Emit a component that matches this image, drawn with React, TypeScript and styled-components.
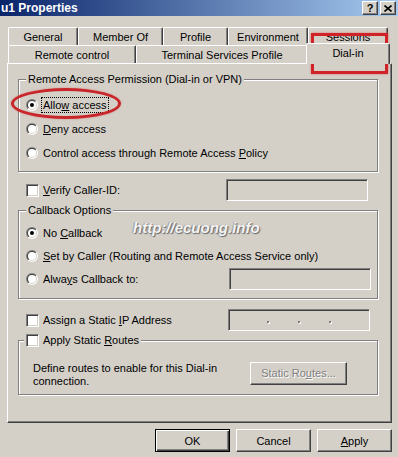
import React from "react";
import styled, { createGlobalStyle, css } from "styled-components";

const GlobalStyle = createGlobalStyle`
  html, body {
    margin: 0;
    padding: 0;
    background: #d4d0c8;
  }
  body {
    font-family: "Liberation Sans", Arial, sans-serif;
    font-size: 11px;
    color: #000;
  }
`;

const Window = styled.div`
  position: relative;
  width: 398px;
  height: 457px;
  background: #d4d0c8;
  overflow: hidden;
  display: flex;
  flex-direction: column;
`;

const TitleBar = styled.div`
  height: 16px;
  display: flex;
  align-items: center;
  padding: 0 2px 0 1px;
  background: linear-gradient(to right, #0a246a, #a6caf0);
`;

const Title = styled.div`
  flex: 1;
  color: #fff;
  font-weight: bold;
  font-size: 12px;
  line-height: 16px;
`;

const CaptionButton = styled.div`
  width: 16px;
  height: 14px;
  box-sizing: border-box;
  margin-left: 2px;
  background: #d4d0c8;
  border-top: 1px solid #fff;
  border-left: 1px solid #fff;
  border-right: 1px solid #404040;
  border-bottom: 1px solid #404040;
  box-shadow: inset -1px -1px #808080;
  display: flex;
  align-items: center;
  justify-content: center;
  font-weight: bold;
  font-size: 11px;
  line-height: 1;
`;

const TabRows = styled.div`
  margin-top: 11px;
  padding-left: 8px;
  display: flex;
  flex-direction: column;
`;

const TabRow = styled.div`
  display: flex;
  align-items: flex-end;
  height: 18px;
`;

const Tab = styled.div<{ $w: number; $active?: boolean }>`
  box-sizing: border-box;
  width: ${(p) => p.$w}px;
  height: 18px;
  background: #d4d0c8;
  border-top: 1px solid #fff;
  border-left: 1px solid #fff;
  border-right: 1px solid #404040;
  border-radius: 2px 2px 0 0;
  box-shadow: inset -1px 0 #808080;
  display: flex;
  align-items: center;
  justify-content: center;
  white-space: nowrap;
  ${(p) =>
    p.$active &&
    css`
      position: relative;
      z-index: 1;
      width: ${p.$w + 4}px;
      height: 21px;
      margin: 0 -2px -1px -2px;
      padding-bottom: 2px;
    `}
`;

const Panel = styled.div`
  box-sizing: border-box;
  margin-left: 7px;
  width: 385px;
  height: 360px;
  border-top: 1px solid #fff;
  border-left: 1px solid #fff;
  border-right: 1px solid #404040;
  border-bottom: 1px solid #404040;
  box-shadow: inset -1px -1px #808080;
  padding: 0 13px 0 10px;
  display: flex;
  flex-direction: column;
`;

const Group = styled.div<{ $mt: number }>`
  margin-top: ${(p) => p.$mt}px;
  border: 1px solid #808080;
  box-shadow: inset 1px 1px #fff, 1px 1px #fff;
  padding: 0 6px 0 7px;
  display: flex;
  flex-direction: column;
`;

const Legend = styled.div<{ $flush?: boolean }>`
  align-self: flex-start;
  height: 13px;
  line-height: 13px;
  margin-top: -7px;
  margin-left: ${(p) => (p.$flush ? -2 : 0)}px;
  padding: 0 2px;
  background: #d4d0c8;
  display: flex;
  align-items: center;
  gap: 4px;
  white-space: nowrap;
`;

const Options = styled.div<{ $pt: number; $pb: number; $gap: number }>`
  display: flex;
  flex-direction: column;
  gap: ${(p) => p.$gap}px;
  padding: ${(p) => p.$pt}px 0 ${(p) => p.$pb}px 0;
`;

const Row = styled.div`
  display: flex;
  align-items: center;
  height: 22px;
  gap: 5px;
  white-space: nowrap;
`;

const FieldRow = styled.div<{ $mt: number; $pr: number }>`
  margin-top: ${(p) => p.$mt}px;
  padding: 0 ${(p) => p.$pr}px 0 8px;
  display: flex;
  align-items: center;
  height: 22px;
  gap: 4px;
  white-space: nowrap;
`;

const FocusLabel = styled.span`
  border: 1px dotted #000;
  padding: 0 1px;
  margin-left: -2px;
  line-height: 14px;
`;

const Key = styled.span`
  text-decoration: underline;
`;

const CheckBox = styled.div`
  flex: none;
  width: 13px;
  height: 13px;
  box-sizing: border-box;
  background: #fff;
  border-top: 1px solid #808080;
  border-left: 1px solid #808080;
  border-right: 1px solid #fff;
  border-bottom: 1px solid #fff;
  box-shadow: inset 1px 1px #404040, inset -1px -1px #d4d0c8;
`;

const TextBox = styled.div`
  flex: none;
  margin-left: auto;
  width: 142px;
  height: 22px;
  box-sizing: border-box;
  background: #d4d0c8;
  border-top: 1px solid #808080;
  border-left: 1px solid #808080;
  border-right: 1px solid #fff;
  border-bottom: 1px solid #fff;
  box-shadow: inset 1px 1px #404040, inset -1px -1px #d4d0c8;
  display: flex;
  align-items: center;
  padding-left: 38px;
  gap: 29px;
`;

const IpDot = styled.span`
  width: 2px;
  height: 2px;
  margin-top: 4px;
  background: #808080;
  box-shadow: 1px 1px #fff;
`;

const RoutesRow = styled.div`
  display: flex;
  align-items: flex-start;
  justify-content: space-between;
  padding: 15px 24px 6px 7px;
  line-height: 13px;
`;

const PushButton = styled.div<{ $w: number; $default?: boolean; $disabled?: boolean }>`
  flex: none;
  width: ${(p) => p.$w}px;
  height: 23px;
  box-sizing: border-box;
  background: #d4d0c8;
  display: flex;
  align-items: center;
  justify-content: center;
  white-space: nowrap;
  border-top: 1px solid #fff;
  border-left: 1px solid #fff;
  border-right: 1px solid #404040;
  border-bottom: 1px solid #404040;
  box-shadow: inset -1px -1px #808080;
  ${(p) =>
    p.$default &&
    css`
      border: 1px solid #000;
      box-shadow: inset 1px 1px #fff, inset -1px -1px #404040, inset -2px -2px #808080;
    `}
  ${(p) =>
    p.$disabled &&
    css`
      color: #808080;
      text-shadow: 1px 1px #fff;
    `}
`;

const ButtonBar = styled.div`
  margin-top: 6px;
  padding-right: 6px;
  display: flex;
  justify-content: flex-end;
  gap: 6px;
`;

const Watermark = styled.div`
  position: absolute;
  left: 133px;
  top: 219px;
  font-size: 15px;
  font-weight: bold;
  font-style: italic;
  color: #f4f4f4;
  text-shadow: 1px 1px 1px #666, -1px 0 1px #999;
  pointer-events: none;
`;

const RedBox = styled.div`
  position: absolute;
  left: 311px;
  top: 33px;
  width: 77px;
  height: 41px;
  box-sizing: border-box;
  border: 3px solid #cf2327;
  box-shadow: 0 0 2px rgba(220, 60, 60, 0.6);
  pointer-events: none;
`;

const RedEllipse = styled.div`
  position: absolute;
  left: 11px;
  top: 88px;
  width: 110px;
  height: 31px;
  box-sizing: border-box;
  border: 3px solid #c8262a;
  border-radius: 50%;
  box-shadow: 0 0 2px rgba(220, 60, 60, 0.5);
  pointer-events: none;
`;

const Radio = ({ checked }: { checked?: boolean }) => (
  <svg width="12" height="12" viewBox="0 0 12 12" style={{ flex: "none" }}>
    <defs>
      <linearGradient id="rOuter" x1="0" y1="0" x2="1" y2="1">
        <stop offset="0.5" stopColor="#808080" />
        <stop offset="0.5" stopColor="#ffffff" />
      </linearGradient>
      <linearGradient id="rInner" x1="0" y1="0" x2="1" y2="1">
        <stop offset="0.5" stopColor="#404040" />
        <stop offset="0.5" stopColor="#d4d0c8" />
      </linearGradient>
    </defs>
    <circle cx="6" cy="6" r="6" fill="url(#rOuter)" />
    <circle cx="6" cy="6" r="5" fill="url(#rInner)" />
    <circle cx="6" cy="6" r="4" fill="#fff" />
    {checked && <circle cx="6" cy="6" r="2" fill="#000" />}
  </svg>
);

const CloseGlyph = () => (
  <svg width="8" height="7" viewBox="0 0 8 7">
    <path d="M0.5 0.5 L7.5 6.5 M7.5 0.5 L0.5 6.5" stroke="#000" strokeWidth="1.6" />
  </svg>
);

const backTabs = [
  { label: "General", w: 70 },
  { label: "Member Of", w: 85 },
  { label: "Profile", w: 65 },
  { label: "Environment", w: 80 },
  { label: "Sessions", w: 80 },
];

const frontTabs = [
  { label: "Remote control", w: 128 },
  { label: "Terminal Services Profile", w: 172 },
  { label: "Dial-in", w: 80, active: true },
];

export default function App() {
  return (
    <>
      <GlobalStyle />
      <Window>
        <TitleBar>
          <Title>u1 Properties</Title>
          <CaptionButton>?</CaptionButton>
          <CaptionButton>
            <CloseGlyph />
          </CaptionButton>
        </TitleBar>

        <TabRows>
          <TabRow>
            {backTabs.map((t) => (
              <Tab key={t.label} $w={t.w}>
                {t.label}
              </Tab>
            ))}
          </TabRow>
          <TabRow>
            {frontTabs.map((t) => (
              <Tab key={t.label} $w={t.w} $active={t.active}>
                {t.label}
              </Tab>
            ))}
          </TabRow>
        </TabRows>

        <Panel>
          <Group $mt={15}>
            <Legend>Remote Access Permission (Dial-in or VPN)</Legend>
            <Options $pt={8} $pb={7} $gap={2}>
              <Row>
                <Radio checked />
                <FocusLabel>
                  Allo<Key>w</Key> access
                </FocusLabel>
              </Row>
              <Row>
                <Radio />
                <span>
                  <Key>D</Key>eny access
                </span>
              </Row>
              <Row>
                <Radio />
                <span>
                  Control access through Remote Access <Key>P</Key>olicy
                </span>
              </Row>
            </Options>
          </Group>

          <FieldRow $mt={7} $pr={10}>
            <CheckBox />
            <span>
              <Key>V</Key>erify Caller-ID:
            </span>
            <TextBox />
          </FieldRow>

          <Group $mt={9}>
            <Legend>Callback Options</Legend>
            <Options $pt={5} $pb={8} $gap={1}>
              <Row>
                <Radio checked />
                <span>
                  No <Key>C</Key>allback
                </span>
              </Row>
              <Row>
                <Radio />
                <span>
                  <Key>S</Key>et by Caller (Routing and Remote Access Service only)
                </span>
              </Row>
              <Row>
                <Radio />
                <span>
                  Alwa<Key>y</Key>s Callback to:
                </span>
                <TextBox />
              </Row>
            </Options>
          </Group>

          <FieldRow $mt={10} $pr={8}>
            <CheckBox />
            <span>
              Assign a Static <Key>I</Key>P Address
            </span>
            <TextBox>
              <IpDot />
              <IpDot />
              <IpDot />
            </TextBox>
          </FieldRow>

          <Group $mt={9}>
            <Legend $flush>
              <CheckBox />
              <span>
                Apply Static <Key>R</Key>outes
              </span>
            </Legend>
            <RoutesRow>
              <span>
                Define routes to enable for this Dial-in
                <br />
                connection.
              </span>
              <PushButton $w={97} $disabled>
                Static Ro<Key>u</Key>tes...
              </PushButton>
            </RoutesRow>
          </Group>
        </Panel>

        <ButtonBar>
          <PushButton $w={75} $default>
            OK
          </PushButton>
          <PushButton $w={75}>Cancel</PushButton>
          <PushButton $w={75}>
            <Key>A</Key>pply
          </PushButton>
        </ButtonBar>

        <Watermark>http://ecuong.info</Watermark>
        <RedBox />
        <RedEllipse />
      </Window>
    </>
  );
}
